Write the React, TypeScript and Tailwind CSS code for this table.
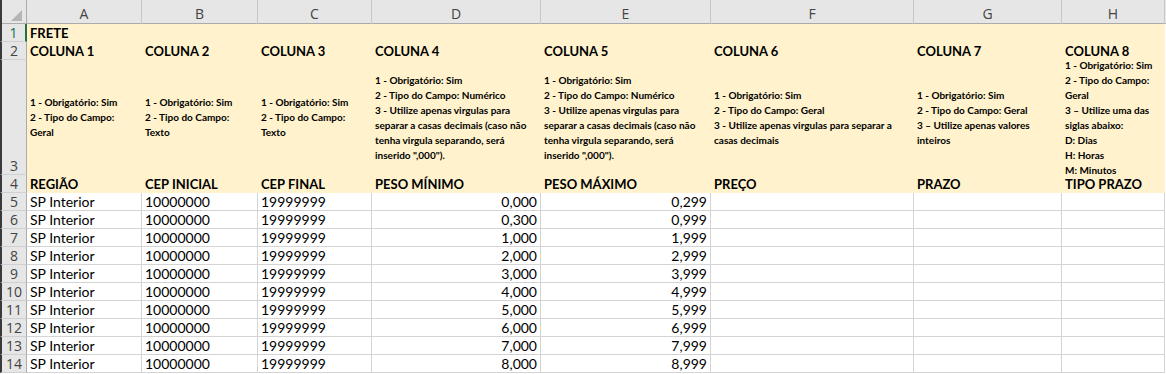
const GRID = 'grid grid-cols-[27px_115px_116px_114px_169px_170px_203px_148px_103px_1fr]';
const CELL_FONT = 'font-["Lato","Liberation_Sans",sans-serif]';

const COLUMNS = ['A', 'B', 'C', 'D', 'E', 'F', 'G', 'H'];

const NOTES: string[][] = [
  ['1 - Obrigatório: Sim', '2 - Tipo do Campo:', 'Geral'],
  ['1 - Obrigatório: Sim', '2 - Tipo do Campo:', 'Texto'],
  ['1 - Obrigatório: Sim', '2 - Tipo do Campo:', 'Texto'],
  [
    '1 - Obrigatório: Sim',
    '2 - Tipo do Campo: Numérico',
    '3 - Utilize apenas virgulas para',
    'separar a casas decimais (caso não',
    'tenha virgula separando, será',
    'inserido ",000").',
  ],
  [
    '1 - Obrigatório: Sim',
    '2 - Tipo do Campo: Numérico',
    '3 - Utilize apenas virgulas para',
    'separar a casas decimais (caso não',
    'tenha virgula separando, será',
    'inserido ",000").',
  ],
  [
    '1 - Obrigatório: Sim',
    '2 - Tipo do Campo: Geral',
    '3 - Utilize apenas virgulas para separar a',
    'casas decimais',
  ],
  ['1 - Obrigatório: Sim', '2 - Tipo do Campo: Geral', '3 – Utilize apenas valores', 'inteiros'],
  [
    '1 - Obrigatório: Sim',
    '2 - Tipo do Campo:',
    'Geral',
    '3 – Utilize uma das',
    'siglas abaixo:',
    'D: Dias',
    'H: Horas',
    'M: Minutos',
  ],
];

const FIELDS = ['REGIÃO', 'CEP INICIAL', 'CEP FINAL', 'PESO MÍNIMO', 'PESO MÁXIMO', 'PREÇO', 'PRAZO', 'TIPO PRAZO'];

const WEIGHTS: [string, string][] = [
  ['0,000', '0,299'],
  ['0,300', '0,999'],
  ['1,000', '1,999'],
  ['2,000', '2,999'],
  ['3,000', '3,999'],
  ['4,000', '4,999'],
  ['5,000', '5,999'],
  ['6,000', '6,999'],
  ['7,000', '7,999'],
  ['8,000', '8,999'],
];

function RowHead({ n, active, h }: { n: number; active?: boolean; h: string }) {
  return (
    <div
      className={`${h} flex items-end justify-center bg-[#e6e6e6] border-l-2 border-l-[#3a3a3a] border-b border-b-[#d0d0d0] font-["Open_Sans","Noto_Sans",sans-serif] text-[14px] leading-[17px] ${
        active ? 'border-r-2 border-r-[#217346] text-[#217346]' : 'border-r border-r-[#ababab] text-[#444]'
      }`}
    >
      {n}
    </div>
  );
}

export default function App() {
  return (
    <div className={`w-[1166px] h-[374px] overflow-hidden bg-white text-black ${CELL_FONT}`}>
      {/* column letters */}
      <div className={`${GRID} h-6 bg-[#e6e6e6] border-b border-[#ababab]`}>
        <div className="relative border-l-2 border-l-[#3a3a3a] border-r border-r-[#ababab]">
          <div className="absolute right-[4px] bottom-[3px] w-0 h-0 border-l-[11px] border-l-transparent border-b-[11px] border-b-[#b5b5b5]" />
        </div>
        {COLUMNS.map((c) => (
          <div
            key={c}
            className='flex items-center justify-center pt-[3px] border-r border-[#c6c6c6] font-["Open_Sans","Noto_Sans",sans-serif] text-[14px] text-[#444]'
          >
            {c}
          </div>
        ))}
        <div />
      </div>

      {/* row 1 */}
      <div className={GRID}>
        <RowHead n={1} active h="h-[18px]" />
        <div className="col-span-8 h-[18px] bg-[#fff2cc] px-[3px] text-[13px] leading-[18px] font-bold">FRETE</div>
        <div />
      </div>

      {/* row 2 */}
      <div className={GRID}>
        <RowHead n={2} h="h-[18px]" />
        {COLUMNS.map((c, i) => (
          <div key={c} className="h-[18px] bg-[#fff2cc] px-[3px] text-[13px] leading-[18px] font-bold whitespace-nowrap">
            COLUNA {i + 1}
          </div>
        ))}
        <div />
      </div>

      {/* row 3 - field rules */}
      <div className={GRID}>
        <RowHead n={3} h="h-[115px]" />
        {NOTES.map((lines, i) => (
          <div key={i} className="h-[115px] bg-[#fff2cc] px-[3px] flex flex-col justify-center text-[10px] leading-[15px] font-bold">
            {lines.map((l, j) => (
              <div key={j} className="whitespace-nowrap">
                {l}
              </div>
            ))}
          </div>
        ))}
        <div />
      </div>

      {/* row 4 - field names */}
      <div className={GRID}>
        <RowHead n={4} h="h-[18px]" />
        {FIELDS.map((f) => (
          <div key={f} className="h-[18px] bg-[#fff2cc] px-[3px] text-[13px] leading-[18px] font-bold whitespace-nowrap">
            {f}
          </div>
        ))}
        <div />
      </div>

      {/* data rows */}
      {WEIGHTS.map(([min, max], i) => (
        <div key={i} className={GRID}>
          <RowHead n={i + 5} h="h-[18px]" />
          <div className="h-[18px] px-[3px] border-r border-b border-[#d4d4d4] text-[14px] leading-[17px]">SP Interior</div>
          <div className="h-[18px] px-[3px] border-r border-b border-[#d4d4d4] text-[14px] leading-[17px]">10000000</div>
          <div className="h-[18px] px-[3px] border-r border-b border-[#d4d4d4] text-[14px] leading-[17px]">19999999</div>
          <div className="h-[18px] px-[3px] border-r border-b border-[#d4d4d4] text-[14px] leading-[17px] text-right">{min}</div>
          <div className="h-[18px] px-[3px] border-r border-b border-[#d4d4d4] text-[14px] leading-[17px] text-right">{max}</div>
          <div className="h-[18px] border-r border-b border-[#d4d4d4]" />
          <div className="h-[18px] border-r border-b border-[#d4d4d4]" />
          <div className="h-[18px] border-r border-b border-[#d4d4d4]" />
          <div />
        </div>
      ))}
    </div>
  );
}
